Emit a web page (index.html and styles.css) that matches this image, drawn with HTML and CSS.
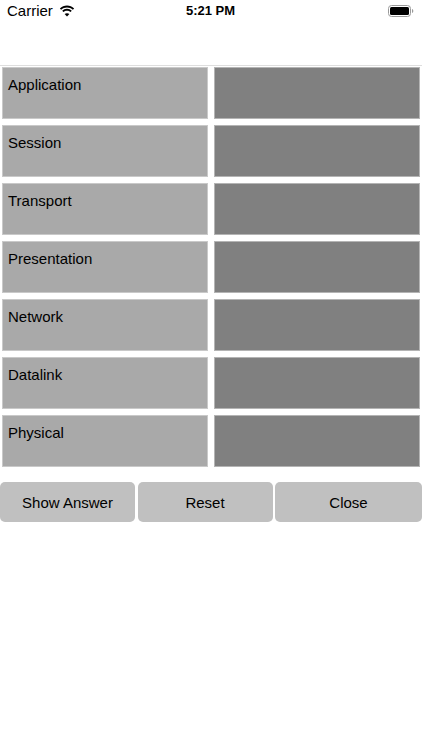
FILE: index.html
```html
<!DOCTYPE html>
<html>
<head>
<meta charset="utf-8">
<link rel="stylesheet" href="styles.css">
</head>
<body>
<div class="screen">
  <div class="statusbar">
    <div class="sb-left">
      <span class="carrier">Carrier</span>
      <svg class="wifi" width="16" height="12" viewBox="0 0 15 11">
        <path d="M7.5 2.2c2.1 0 4 .8 5.5 2.1l1.2-1.2C12.4 1.4 10 .4 7.5.4S2.6 1.4.8 3.1L2 4.3c1.5-1.3 3.4-2.1 5.5-2.1z" fill="#000"/>
        <path d="M7.5 5.3c1.3 0 2.4.5 3.3 1.2l1.2-1.2C10.8 4.2 9.2 3.5 7.5 3.5S4.2 4.2 3 5.3l1.2 1.2c.9-.7 2-1.2 3.3-1.2z" fill="#000"/>
        <path d="M7.5 10.6l2.2-2.2c-.6-.5-1.4-.9-2.2-.9s-1.6.4-2.2.9z" fill="#000"/>
      </svg>
    </div>
    <div class="sb-time">5:21 PM</div>
    <div class="sb-right">
      <svg class="battery" width="26" height="12" viewBox="0 0 26 12">
        <rect x="0.5" y="0.5" width="22" height="11" rx="3" ry="3" fill="none" stroke="#9a9a9a" stroke-width="1"/>
        <rect x="2" y="2" width="19" height="8" rx="1.5" ry="1.5" fill="#000"/>
        <path d="M24 4v4c.8-.3 1.3-1.1 1.3-2S24.8 4.3 24 4z" fill="#9a9a9a"/>
      </svg>
    </div>
  </div>
  <div class="navbar"></div>
  <div class="grid">
    <div class="cell label">Application</div><div class="cell answer"></div>
    <div class="cell label">Session</div><div class="cell answer"></div>
    <div class="cell label">Transport</div><div class="cell answer"></div>
    <div class="cell label">Presentation</div><div class="cell answer"></div>
    <div class="cell label">Network</div><div class="cell answer"></div>
    <div class="cell label">Datalink</div><div class="cell answer"></div>
    <div class="cell label">Physical</div><div class="cell answer"></div>
  </div>
  <div class="buttons">
    <button class="btn">Show Answer</button>
    <button class="btn">Reset</button>
    <button class="btn">Close</button>
  </div>
</div>
</body>
</html>
```

FILE: styles.css
```css
* { box-sizing: border-box; }
html, body {
  margin: 0;
  padding: 0;
  background: #fff;
}
body {
  font-family: "Liberation Sans", Arial, sans-serif;
  color: #000;
}
.screen {
  width: 422px;
  height: 750px;
  background: #fff;
}
.statusbar {
  height: 22px;
  display: grid;
  grid-template-columns: 1fr auto 1fr;
  align-items: center;
  padding: 0 8px 0 7px;
}
.sb-left {
  display: flex;
  align-items: center;
  gap: 6px;
}
.carrier {
  font-size: 15px;
  line-height: 22px;
}
.wifi { display: block; margin-top: -1px; }
.sb-time {
  font-size: 13px;
  font-weight: bold;
  line-height: 22px;
}
.sb-right {
  display: flex;
  justify-content: flex-end;
}
.battery { display: block; }
.navbar {
  height: 44px;
  border-bottom: 1px solid #dedede;
}
.grid {
  display: grid;
  grid-template-columns: 206px 206px;
  grid-auto-rows: 52px;
  column-gap: 6px;
  row-gap: 6px;
  padding: 1px 2px 0 2px;
}
.cell {
  border: 1px solid #c9c9c9;
}
.label {
  background: #a9a9a9;
  font-size: 15px;
  line-height: 17px;
  padding: 8px 5px;
}
.answer {
  background: #808080;
  border-color: #b4b4b4;
}
.buttons {
  display: grid;
  grid-template-columns: 135px 135px 1fr;
  column-gap: 2.5px;
  margin-top: 15px;
}
.btn {
  height: 40px;
  border: none;
  border-radius: 5px;
  background: #c0c0c0;
  font-family: "Liberation Sans", Arial, sans-serif;
  font-size: 15px;
  color: #000;
  padding: 0;
}
```
